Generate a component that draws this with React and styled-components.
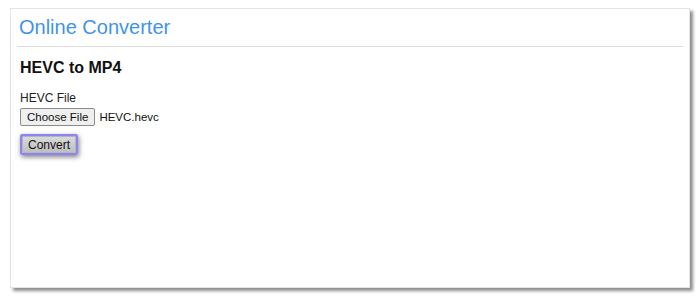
import React from "react";
import styled, { createGlobalStyle } from "styled-components";

const GlobalStyle = createGlobalStyle`
  html, body {
    margin: 0;
    padding: 0;
    background: #ffffff;
    font-family: "Liberation Sans", Arial, sans-serif;
  }
`;

const Page = styled.div`
  width: 700px;
  height: 298px;
  padding: 8px 0 0 10px;
  box-sizing: border-box;
`;

const Card = styled.div`
  width: 680px;
  height: 280px;
  box-sizing: border-box;
  background: #ffffff;
  border: 1px solid #e4e4e4;
  box-shadow: 3px 3px 3px rgba(0, 0, 0, 0.45);
  padding: 0 6px;
`;

const Header = styled.div`
  height: 37px;
  display: flex;
  align-items: center;
  padding-left: 2px;
  border-bottom: 1px solid #dedede;
`;

const Title = styled.h1`
  margin: 0;
  font-size: 20px;
  font-weight: normal;
  color: #3f94e9;
`;

const Body = styled.div`
  padding: 12px 3px 0;
  display: flex;
  flex-direction: column;
  align-items: flex-start;
`;

const Heading = styled.h2`
  margin: 0 0 14px;
  font-size: 16px;
  font-weight: bold;
  color: #111;
`;

const Label = styled.label`
  font-size: 12px;
  color: #222;
  margin-bottom: 3px;
`;

const FileRow = styled.div`
  display: flex;
  align-items: center;
  gap: 4px;
  margin-bottom: 8px;
`;

const FileButton = styled.button`
  height: 18px;
  padding: 0 6px;
  font-family: "Liberation Sans", Arial, sans-serif;
  font-size: 11.5px;
  color: #111;
  background: #efefef;
  border: 1px solid #8a8a8a;
  border-radius: 2px;
`;

const FileName = styled.span`
  font-size: 11.5px;
  color: #111;
`;

const ConvertButton = styled.button`
  height: 21px;
  padding: 0 6px;
  font-family: "Liberation Sans", Arial, sans-serif;
  font-size: 12px;
  color: #111;
  background: linear-gradient(#dcdcdc, #bdbdbd);
  border: 2px solid #8d84f4;
  border-radius: 2px;
  box-shadow: 1px 2px 5px rgba(0, 0, 0, 0.5), inset 0 0 0 1px #b4b4c4;
`;

export default function App() {
  return (
    <>
      <GlobalStyle />
      <Page>
        <Card>
          <Header>
            <Title>Online Converter</Title>
          </Header>
          <Body>
            <Heading>HEVC to MP4</Heading>
            <Label>HEVC File</Label>
            <FileRow>
              <FileButton>Choose File</FileButton>
              <FileName>HEVC.hevc</FileName>
            </FileRow>
            <ConvertButton>Convert</ConvertButton>
          </Body>
        </Card>
      </Page>
    </>
  );
}
